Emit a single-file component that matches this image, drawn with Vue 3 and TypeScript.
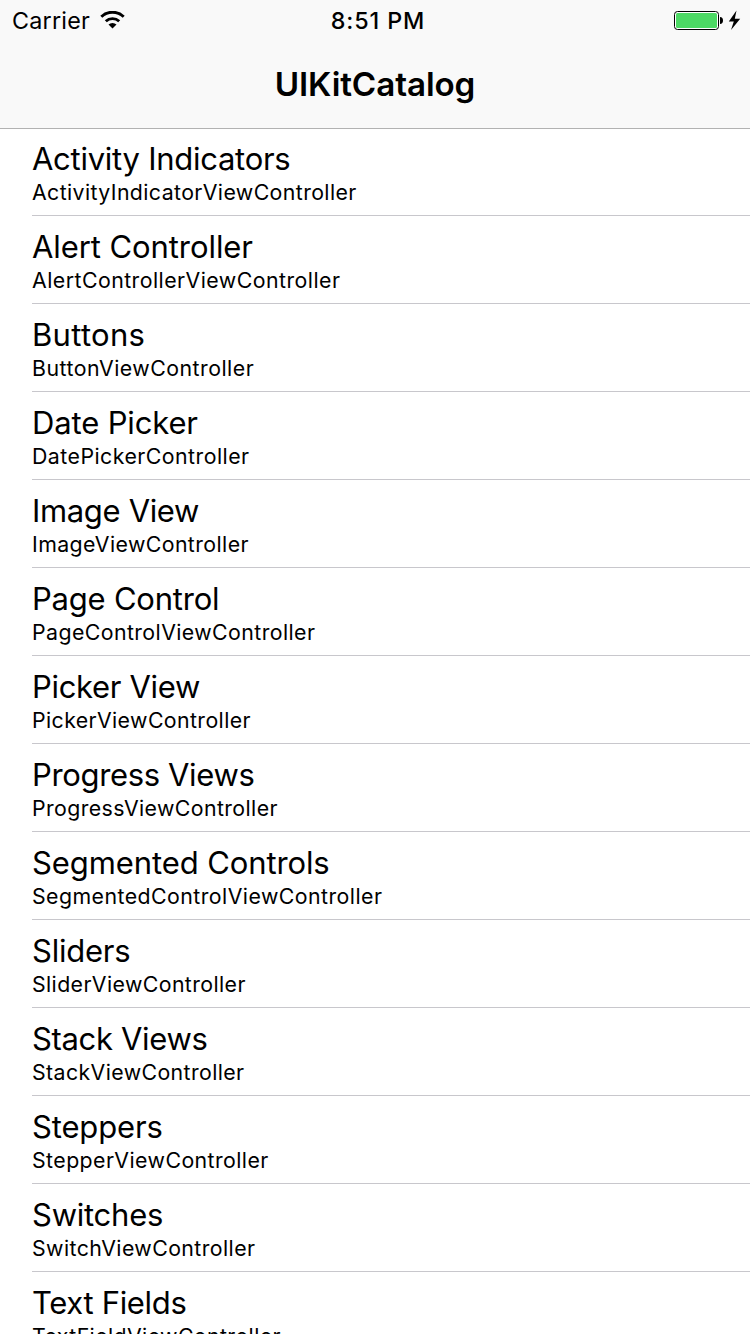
<script setup lang="ts">
interface Row { title: string; detail: string; titleSpacing: number; detailSpacing: number }
const rows: Row[] = [
  { title: 'Activity Indicators', detail: 'ActivityIndicatorViewController', titleSpacing: -0.27, detailSpacing: 0.4 },
  { title: 'Alert Controller', detail: 'AlertControllerViewController', titleSpacing: -0.08, detailSpacing: 0.46 },
  { title: 'Buttons', detail: 'ButtonViewController', titleSpacing: 0.3, detailSpacing: 0.49 },
  { title: 'Date Picker', detail: 'DatePickerController', titleSpacing: -0.15, detailSpacing: 0.47 },
  { title: 'Image View', detail: 'ImageViewController', titleSpacing: -0.34, detailSpacing: 0.41 },
  { title: 'Page Control', detail: 'PageControlViewController', titleSpacing: -0.22, detailSpacing: 0.42 },
  { title: 'Picker View', detail: 'PickerViewController', titleSpacing: -0.33, detailSpacing: 0.4 },
  { title: 'Progress Views', detail: 'ProgressViewController', titleSpacing: -0.35, detailSpacing: 0.4 },
  { title: 'Segmented Controls', detail: 'SegmentedControlViewController', titleSpacing: -0.1, detailSpacing: 0.45 },
  { title: 'Sliders', detail: 'SliderViewController', titleSpacing: -0.24, detailSpacing: 0.4 },
  { title: 'Stack Views', detail: 'StackViewController', titleSpacing: -0.34, detailSpacing: 0.4 },
  { title: 'Steppers', detail: 'StepperViewController', titleSpacing: -0.15, detailSpacing: 0.43 },
  { title: 'Switches', detail: 'SwitchViewController', titleSpacing: -0.25, detailSpacing: 0.42 },
  { title: 'Text Fields', detail: 'TextFieldViewController', titleSpacing: -0.33, detailSpacing: 0.4 },
]
</script>

<template>
  <div class="screen">
    <header class="top">
      <div class="status">
        <div class="left">
          <span class="carrier">Carrier</span>
          <svg class="wifi" width="25" height="18" viewBox="0 0 25 18">
            <path d="M1.300 5.700a16.200 16.200 0 0 1 22.400 0M5.800 10.300a9.800 9.800 0 0 1 13.400 0" fill="none" stroke="#000" stroke-width="2.900" />
            <path d="M12.500 17.600l-4-4.100a5.800 5.800 0 0 1 8 0z" />
          </svg>
        </div>
        <span class="time">8:51 PM</span>
        <div class="right">
          <svg width="68" height="20" viewBox="0 0 68 20">
            <rect x=".5" y="1.500" width="44" height="18" rx="3" fill="#fff" stroke="#000" />
            <rect x="2" y="3" width="41" height="15" rx="1.500" fill="#4cd964" />
            <path d="M46 7q3 .3 3 3.500t-3 3.500z" />
            <path d="M62.500 .5L54.800 11.500h5L57 20l9.200-11.200h-5.400z" />
          </svg>
        </div>
      </div>
      <h1>UIKitCatalog</h1>
    </header>
    <ul class="list">
      <li v-for="row in rows" :key="row.title">
        <div class="title" :style="{ letterSpacing: row.titleSpacing + 'px' }">{{ row.title }}</div>
        <div class="detail" :style="{ letterSpacing: row.detailSpacing + 'px' }">{{ row.detail }}</div>
      </li>
    </ul>
  </div>
</template>

<style>
body { margin: 0; background: #fff; }
</style>
<style scoped>
.screen { width: 750px; height: 1334px; overflow: hidden; background: #fff; color: #000; font-family: Inter, "Liberation Sans", sans-serif; }
.top { height: 128px; background: #f9f9f9; box-shadow: 0 1px #b2b2b2; }
.status { height: 40px; display: grid; grid-template-columns: 1fr auto 1fr; align-items: center; font-size: 23.300px; }
.left { display: flex; align-items: center; padding-left: 12px; gap: 10px; }
.carrier { letter-spacing: .25px; padding-top: 1px; }
.right { display: flex; justify-content: flex-end; padding-right: 8px; }
.time { font-weight: 500; letter-spacing: .9px; padding: 1px 0 0 6px; }
h1 { margin: 0; height: 88px; line-height: 89px; font-size: 33.200px; font-weight: 600; letter-spacing: -.1px; text-align: center; }
.list { list-style: none; margin: 0; padding: 0 0 0 32px; }
li { height: 88px; box-sizing: border-box; padding-top: 11px; border-bottom: 1px solid #c8c7cc; }
.title { font-size: 31px; line-height: 39px; margin-bottom: 1px; }
.detail { font-size: 21.300px; line-height: 26px; }
</style>
